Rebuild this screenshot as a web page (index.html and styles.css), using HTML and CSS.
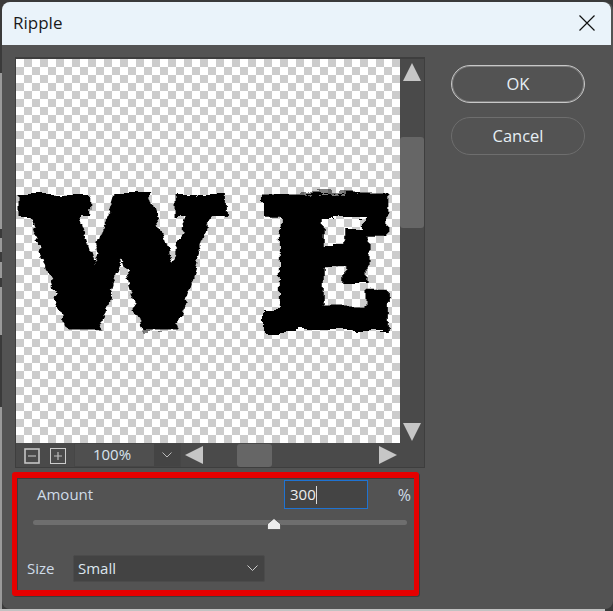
FILE: index.html
```html
<!DOCTYPE html>
<html lang="en">
  <head>
    <meta charset="UTF-8" />
    <title>Ripple</title>
    <link rel="stylesheet" href="styles.css">
  </head>
  <body>
    <svg class="defs" width="0" height="0">
      <filter id="ripple" x="-5%" y="-5%" width="110%" height="110%">
        <feMorphology in="SourceGraphic" operator="dilate" radius="6" result="fat" />
        <feTurbulence type="fractalNoise" baseFrequency="0.03 0.09" numOctaves="4" seed="7" result="noise" />
        <feDisplacementMap in="fat" in2="noise" scale="13" xChannelSelector="R" yChannelSelector="G" />
      </filter>
    </svg>

    <div class="dialog">
      <div class="titlebar">
        <span class="title">Ripple</span>
        <svg class="close" width="16" height="16" viewBox="0 0 16 16">
          <path d="M0.5 0.5L15.5 15.5M15.5 0.5L0.5 15.5" stroke="#111" stroke-width="1.2" fill="none" />
        </svg>
      </div>

      <div class="content">
        <div class="left">
          <div class="preview">
            <div class="canvas">
              <div class="letters"><span>W</span><span>E</span></div>
            </div>
            <div class="vscroll">
              <div class="arrow arrow-up"></div>
              <div class="vtrack"><div class="vthumb"></div></div>
              <div class="arrow arrow-down"></div>
            </div>
            <div class="toolbar">
              <div class="zoom-btn">
                <svg width="16" height="16" viewBox="0 0 16 16"><rect x="1" y="1" width="14" height="14" fill="none" stroke="#c4c4c4" stroke-width="1.6" /><path d="M4 8H12" stroke="#aaa" stroke-width="1.4" /></svg>
              </div>
              <div class="zoom-btn">
                <svg width="16" height="16" viewBox="0 0 16 16"><rect x="0.5" y="0.5" width="15" height="15" fill="none" stroke="#ccc" /><path d="M4 8H12M8 4V12" stroke="#bbb" stroke-width="1.2" /></svg>
              </div>
              <div class="zoom-select">
                <span class="zoom-value">100%</span>
                <span class="zoom-caret">
                  <svg width="10" height="6" viewBox="0 0 10 6"><path d="M0.5 0.5L5 5L9.5 0.5" fill="none" stroke="#bbb" /></svg>
                </span>
              </div>
              <div class="arrow arrow-left"></div>
              <div class="htrack"><div class="hthumb"></div></div>
              <div class="arrow arrow-right"></div>
            </div>
          </div>

          <div class="controls">
            <div class="amount-row">
              <label class="amount-label">Amount</label>
              <div class="amount-input">300<span class="cursor"></span></div>
              <span class="percent">%</span>
            </div>
            <div class="slider">
              <div class="slider-track"></div>
              <svg class="slider-thumb" width="14" height="12" viewBox="0 0 14 12">
                <path d="M0.5 11.5V6L7 0.5L13.5 6V11.5Z" fill="#eee" stroke="#333" stroke-width="0.6" />
              </svg>
            </div>
            <div class="size-row">
              <label class="size-label">Size</label>
              <div class="size-select">
                <span>Small</span>
                <svg width="11" height="6" viewBox="0 0 11 6"><path d="M0.5 0.5L5.5 5.5L10.5 0.5" fill="none" stroke="#ccc" /></svg>
              </div>
            </div>
          </div>
        </div>

        <div class="buttons">
          <button class="btn btn-ok">OK</button>
          <button class="btn">Cancel</button>
        </div>
      </div>
    </div>
  </body>
</html>
```

FILE: styles.css
```css
* {
  margin: 0;
  padding: 0;
  box-sizing: border-box;
}

body {
  width: 613px;
  height: 611px;
  overflow: hidden;
  background-color: #3a3a3a;
  background-image:
    linear-gradient(#c2c2c2, #c2c2c2),
    linear-gradient(#3a3a3a 0 73px, #9a9a9a 73px 229px, #3a3a3a 229px 238px, #9a9a9a 238px 252px, #3a3a3a 252px 262px, #9a9a9a 262px 278px, #3a3a3a 278px 287px, #9a9a9a 287px 335px, #3a3a3a 335px 407px, #9a9a9a 407px);
  background-size: 605px 2px, 2px 100%;
  background-position: 0 100%, 0 0;
  background-repeat: no-repeat;
  font-family: "Open Sans", "Noto Sans", sans-serif;
  padding: 2px 0 2px 2px;
}

.defs {
  display: block;
  height: 0;
}

.dialog {
  height: 607px;
  background: #535353;
  border-radius: 8px;
  overflow: hidden;
}

.titlebar {
  height: 43px;
  width: 609px;
  background: #eaf3fa;
  border-top-right-radius: 8px;
  display: flex;
  align-items: center;
  justify-content: space-between;
  padding: 0 16px 2px 11px;
}

.title {
  font-size: 17px;
  color: #1a1a1a;
}

.content {
  display: flex;
  padding: 12px 0 0 13px;
}

.left {
  width: 410px;
}

.preview {
  width: 410px;
  height: 411px;
  border: 1px solid #3e3e3e;
  border-top-width: 2px;
  background: #4a4a4a;
  display: grid;
  grid-template-columns: 384px 24px;
  grid-template-rows: 384px 24px;
}

.canvas {
  position: relative;
  overflow: hidden;
  background-color: #fff;
  background-image: conic-gradient(#ccc 25%, #fff 0 50%, #ccc 0 75%, #fff 0);
  background-size: 16px 16px;
}

.letters {
  position: absolute;
  left: 0;
  top: 103px;
  display: flex;
  gap: 45px;
  padding-left: 10px;
  font-family: "DejaVu Serif", serif;
  font-weight: bold;
  font-size: 170px;
  line-height: 1.2;
  color: #000;
  filter: url(#ripple);
}

.vscroll {
  display: flex;
  flex-direction: column;
  align-items: center;
  padding: 4px 0 2px;
}

.vtrack {
  flex: 1;
  width: 100%;
  padding-top: 56px;
}

.vthumb {
  height: 91px;
  background: #666;
  border-radius: 3px;
}

.arrow {
  width: 0;
  height: 0;
  flex: none;
}

.arrow-up {
  border-left: 9px solid transparent;
  border-right: 9px solid transparent;
  border-bottom: 18px solid #c6c6c6;
}

.arrow-down {
  border-left: 9px solid transparent;
  border-right: 9px solid transparent;
  border-top: 18px solid #c6c6c6;
}

.arrow-left {
  border-top: 9px solid transparent;
  border-bottom: 9px solid transparent;
  border-right: 18px solid #c6c6c6;
}

.arrow-right {
  border-top: 9px solid transparent;
  border-bottom: 9px solid transparent;
  border-left: 18px solid #c6c6c6;
}

.toolbar {
  grid-column: 1 / 3;
  display: flex;
  align-items: center;
  padding-left: 8px;
  padding-right: 27px;
}

.zoom-btn {
  width: 16px;
  height: 16px;
  margin-right: 10px;
}

.zoom-select {
  width: 107px;
  height: 24px;
  margin-left: -2px;
  margin-right: 4px;
  display: flex;
  background: #4f4f4f;
  border: 1px solid #464646;
}

.zoom-value {
  flex: 1;
  text-align: center;
  font-size: 15px;
  line-height: 21px;
  padding-right: 5px;
  color: #d8e4ee;
}

.zoom-caret {
  width: 26px;
  background: #444;
  display: flex;
  align-items: center;
  justify-content: center;
}

.htrack {
  flex: 1;
  padding-left: 34px;
}

.hthumb {
  width: 35px;
  height: 23px;
  background: #666;
  border-radius: 3px;
}

.controls {
  width: 407px;
  height: 124px;
  margin-top: 4px;
  margin-left: -3px;
  border: 5px solid #e60000;
  border-top-width: 6px;
  border-bottom-width: 6px;
  border-radius: 3px;
  box-shadow: inset 1px 1px 0 #3c3c3c, 1px 1px 0 #3c3c3c;
  padding: 2px 7px 0 10px;
  color: #cfdce8;
  font-size: 15px;
}

.amount-row {
  display: flex;
  align-items: center;
  height: 29px;
  padding-left: 10px;
}

.amount-label {
  width: 247px;
  margin-bottom: 2px;
}

.amount-input {
  width: 84px;
  height: 29px;
  border: 1px solid #1f73d2;
  background: #444;
  padding-left: 5px;
  line-height: 26px;
  font-size: 15px;
  color: #eee;
}

.cursor {
  display: inline-block;
  width: 1px;
  height: 18px;
  background: #ddd;
  vertical-align: -4px;
}

.percent {
  margin-left: auto;
  margin-right: -4px;
  font-size: 16px;
}

.slider {
  position: relative;
  height: 16px;
  margin-top: 5px;
  padding: 6px 0 0 6px;
}

.slider-track {
  height: 5px;
  width: 374px;
  background: #6e6e6e;
  border-radius: 3px;
}

.slider-thumb {
  position: absolute;
  left: 240px;
  top: 4px;
}

.size-row {
  display: flex;
  align-items: center;
  gap: 16px;
  margin-top: 25px;
}

.size-label {
  width: 30px;
  margin-bottom: 2px;
}

.size-select {
  width: 192px;
  height: 27px;
  background: #434343;
  border: 1px solid #4b4b4b;
  border-radius: 2px;
  display: flex;
  align-items: center;
  justify-content: space-between;
  padding: 0 6px 2px 4px;
  color: #dde6ee;
}

.buttons {
  display: flex;
  flex-direction: column;
  gap: 14px;
  margin-left: 26px;
  padding-top: 8px;
}

.btn {
  width: 134px;
  height: 38px;
  border-radius: 20px;
  border: 1px solid #6e6e6e;
  background: #535353;
  color: #e6eef4;
  font-family: inherit;
  font-size: 16.5px;
  padding-bottom: 2px;
}

.btn-ok {
  border-color: #c8c8c8;
  box-shadow: inset 0 0 0 1px rgba(200, 200, 200, 0.35);
}
```
